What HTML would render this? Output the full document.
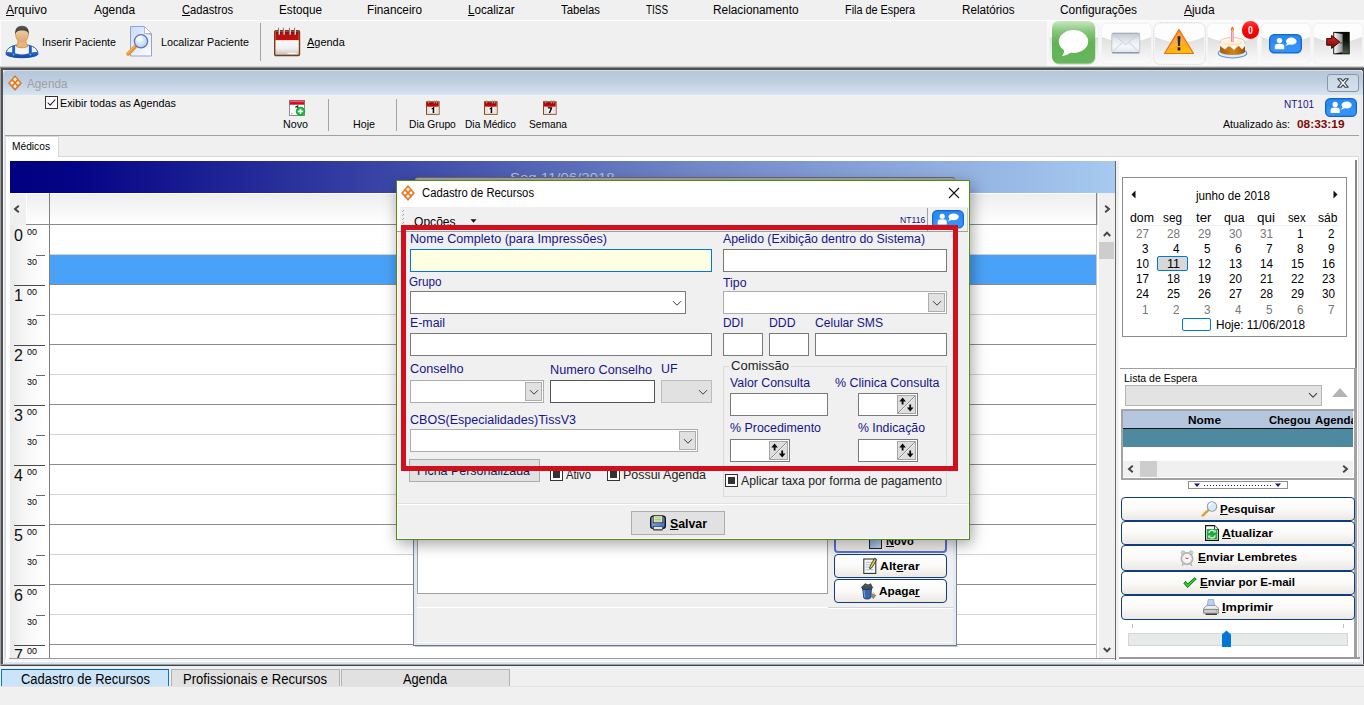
<!DOCTYPE html>
<html>
<head>
<meta charset="utf-8">
<title>Agenda</title>
<style>
*{box-sizing:border-box;margin:0;padding:0}
html,body{width:1364px;height:705px;overflow:hidden;background:#f0f0f0;font-family:"Liberation Sans",sans-serif;color:#000}
#app{position:absolute;left:0;top:0;width:1364px;height:705px;overflow:hidden;background:#f0f0f0}
.a{position:absolute;white-space:nowrap}
u{text-decoration:underline;text-underline-offset:1px;text-decoration-thickness:1px}
.in{position:absolute;background:#fff;border:1px solid #7a7a7a}
.cb{position:absolute;background:#fff;border:1px solid #adadad}
.btnr{position:absolute;background:linear-gradient(#ffffff 0%,#fbfaf9 50%,#ece8e3 100%);border:1px solid #0f3d80;border-radius:4px;}
</style>
</head>
<body>
<div id="app">
<div class="a" style="left:0px;top:0px;width:1364px;height:20px;background:#f0f0f0"></div>
<div class="a" style="left:0px;top:20px;width:1364px;height:1px;background:#fdfdfd"></div>
<div class="a" style="left:6.00px;top:3px;font-size:12px;line-height:14px;color:#000;transform:scaleX(1.0077);transform-origin:0 0;"><u>A</u>rquivo</div>
<div class="a" style="left:94.00px;top:3px;font-size:12px;line-height:14px;color:#000;transform:scaleX(0.9911);transform-origin:0 0;">Agenda</div>
<div class="a" style="left:182.00px;top:3px;font-size:12px;line-height:14px;color:#000;transform:scaleX(0.9326);transform-origin:0 0;"><u>C</u>adastros</div>
<div class="a" style="left:279.00px;top:3px;font-size:12px;line-height:14px;color:#000;transform:scaleX(0.9766);transform-origin:0 0;">Estoque</div>
<div class="a" style="left:367.00px;top:3px;font-size:12px;line-height:14px;color:#000;transform:scaleX(0.9817);transform-origin:0 0;">Financeiro</div>
<div class="a" style="left:468.00px;top:3px;font-size:12px;line-height:14px;color:#000;transform:scaleX(0.9683);transform-origin:0 0;"><u>L</u>ocalizar</div>
<div class="a" style="left:561.00px;top:3px;font-size:12px;line-height:14px;color:#000;transform:scaleX(0.9430);transform-origin:0 0;">Tabelas</div>
<div class="a" style="left:646.00px;top:3px;font-size:12px;line-height:14px;color:#000;transform:scaleX(0.8248);transform-origin:0 0;">TISS</div>
<div class="a" style="left:713.00px;top:3px;font-size:12px;line-height:14px;color:#000;transform:scaleX(0.9860);transform-origin:0 0;">Relacionamento</div>
<div class="a" style="left:844.60px;top:3px;font-size:12px;line-height:14px;color:#000;transform:scaleX(0.9048);transform-origin:0 0;">Fila de Espera</div>
<div class="a" style="left:962.00px;top:3px;font-size:12px;line-height:14px;color:#000;transform:scaleX(0.9719);transform-origin:0 0;">Relatórios</div>
<div class="a" style="left:1060.00px;top:3px;font-size:12px;line-height:14px;color:#000;transform:scaleX(0.9952);transform-origin:0 0;">Configurações</div>
<div class="a" style="left:1184.00px;top:3px;font-size:12px;line-height:14px;color:#000;transform:scaleX(0.9938);transform-origin:0 0;"><u>A</u>juda</div>
<div class="a" style="left:0px;top:21px;width:1364px;height:45px;background:#f0f0f0"></div>
<div class="a" style="left:0px;top:21px;width:1px;height:45px;background:#fbfbfb"></div>
<svg class="a" style="left:5px;top:25px" width="34" height="34" viewBox="0 0 34 34">
<defs><linearGradient id="pg1" x1="0" y1="0" x2="0" y2="1"><stop offset="0" stop-color="#2a6acc"/><stop offset="1" stop-color="#0a3c92"/></linearGradient>
<linearGradient id="pg2" x1="0" y1="0" x2="0" y2="1"><stop offset="0" stop-color="#f6d2a6"/><stop offset="1" stop-color="#dba572"/></linearGradient>
<linearGradient id="pg3" x1="0" y1="0" x2="0" y2="1"><stop offset="0" stop-color="#5a5a5a"/><stop offset="1" stop-color="#2c2c2c"/></linearGradient>
<clipPath id="pcl"><path d="M1 29.5 C1 24.5 4.5 21.5 10.5 20.2 L23.5 20.2 C29.5 21.5 33 24.5 33 29.5 C28 33.8 6 33.8 1 29.5Z"/></clipPath></defs>
<path d="M1 29.5 C1 24.5 4.5 21.5 10.5 20.2 L23.5 20.2 C29.5 21.5 33 24.5 33 29.5 C28 33.8 6 33.8 1 29.5Z" fill="#f3f3f3" stroke="#1b56b2" stroke-width="1"/>
<g clip-path="url(#pcl)">
<path d="M0 27.5 C3 26.5 6 27.3 8 27.6 C12 30 22 30 26 27.6 C28 27.3 31 26.5 34 27.5 L34 34 L0 34Z" fill="url(#pg1)"/>
<rect x="7.2" y="20" width="2.9" height="9" fill="#1f62c4"/><rect x="23.9" y="20" width="2.9" height="9" fill="#1f62c4"/>
</g>
<circle cx="8.6" cy="29.6" r="0.9" fill="#7fa8e6"/><circle cx="25.4" cy="29.6" r="0.9" fill="#7fa8e6"/>
<path d="M13.2 14 C13.2 18 12.5 19.5 10.8 21 C13 23.3 21 23.3 23.2 21 C21.5 19.5 20.8 18 20.8 14Z" fill="#e8b483" stroke="#c98a12" stroke-width="0.8"/>
<ellipse cx="17" cy="10.2" rx="6" ry="7.2" fill="url(#pg2)"/>
<path d="M10.4 10.3 C9.3 3.5 12.8 0.8 17 0.8 C21.2 0.8 24.7 3.5 23.6 10.3 C23.2 6.8 21.5 5.6 17 5.6 C12.5 5.6 10.8 6.8 10.4 10.3Z" fill="url(#pg3)"/>
<path d="M10.6 9 C10.8 12 11.6 14 13 15.5 M23.4 9 C23.2 12 22.4 14 21 15.5" stroke="#c98a12" stroke-width="0.7" fill="none"/>
</svg>
<div class="a" style="left:42.00px;top:36px;font-size:11px;line-height:12px;color:#000;transform:scaleX(0.9683);transform-origin:0 0;">Inserir Paciente</div>
<svg class="a" style="left:126px;top:25.7px" width="27" height="31" viewBox="0 0 27 31">
<defs><linearGradient id="dm1" x1="0" y1="0" x2="1" y2="1"><stop offset="0" stop-color="#c4dcfa"/><stop offset="0.55" stop-color="#e6f0fd"/><stop offset="1" stop-color="#ffffff"/></linearGradient>
<radialGradient id="dm2" cx="0.4" cy="0.35" r="0.7"><stop offset="0" stop-color="#ffffff"/><stop offset="1" stop-color="#9fd0f2"/></radialGradient></defs>
<path d="M4.5 0.5 L18.5 0.5 L25.5 7.5 L25.5 30 L4.5 30Z" fill="url(#dm1)" stroke="#9d9dd2" stroke-width="1"/>
<path d="M18.5 0.5 L18.5 7.5 L25.5 7.5Z" fill="#fff" stroke="#a9a9d8" stroke-width="0.8"/><path d="M18.5 7.5 L25.5 7.5 L25.5 9.5Z" fill="#9aa8b8" opacity="0.6"/>
<path d="M8.8 21.2 L2.2 27.8" stroke="#e8902a" stroke-width="3.8" stroke-linecap="round"/>
<path d="M8.3 20.7 L1.7 27.3" stroke="#f8b858" stroke-width="1.2" stroke-linecap="round"/>
<circle cx="15" cy="15.3" r="6.6" fill="url(#dm2)" stroke="#6c6ea8" stroke-width="1.3"/>
<path d="M11 14.5 A4.5 4.5 0 0 1 16 10.5" stroke="#fff" stroke-width="1.4" fill="none" opacity=".85"/>
</svg>
<div class="a" style="left:161.00px;top:36px;font-size:11px;line-height:12px;color:#000;transform:scaleX(0.9791);transform-origin:0 0;">Localizar Paciente</div>
<div class="a" style="left:260px;top:23px;width:1px;height:38px;background:#a3a3a3"></div>
<svg class="a" style="left:274px;top:27px" width="27" height="30" viewBox="0 0 27 30">
<defs><linearGradient id="c1" x1="0" y1="0" x2="0" y2="1"><stop offset="0" stop-color="#ffffff"/><stop offset="0.7" stop-color="#f2f2f2"/><stop offset="1" stop-color="#bdbdbd"/></linearGradient>
<linearGradient id="c2" x1="0" y1="0" x2="0" y2="1"><stop offset="0" stop-color="#8a0a0a"/><stop offset="0.45" stop-color="#b81010"/><stop offset="1" stop-color="#cc0a0a"/></linearGradient></defs>
<rect x="0.7" y="3.6" width="24.8" height="24.9" rx="1.2" fill="url(#c1)" stroke="#7a3c10" stroke-width="1.4"/>
<rect x="1.4" y="4.3" width="23.4" height="8.8" fill="url(#c2)"/>
<g stroke="#7d7d7d" stroke-width="1.2"><path d="M4.6 0.8V8"/><path d="M9.4 0.8V8"/><path d="M15.5 0.8V8"/><path d="M20.6 0.8V8"/></g>
<g stroke="#ececec" stroke-width="0.9"><path d="M5.5 0.8V7.6"/><path d="M10.3 0.8V7.6"/><path d="M16.4 0.8V7.6"/><path d="M21.5 0.8V7.6"/></g>
<ellipse cx="18" cy="26.3" rx="5" ry="0.9" fill="#fff" opacity=".8"/>
</svg>
<div class="a" style="left:307.00px;top:36px;font-size:11px;line-height:12px;color:#000;transform:scaleX(0.9941);transform-origin:0 0;"><u>A</u>genda</div>
<svg width="0" height="0" style="position:absolute"><defs><linearGradient id="gb1" x1="0" y1="0" x2="0" y2="1"><stop offset="0" stop-color="#f4f4f4"/><stop offset="0.32" stop-color="#dedede"/><stop offset="0.7" stop-color="#eeeeee"/><stop offset="1" stop-color="#fbfbfb"/></linearGradient></defs></svg>
<div class="a" style="left:1047px;top:21px;width:317px;height:45px;background:#fafafa"></div>
<svg class="a" style="left:1048px;top:22px" width="52" height="43" viewBox="0 0 52 43">
<rect x="0.5" y="0.5" width="51" height="42" rx="6.5" fill="#f3f3f3" stroke="#f6f6f6" stroke-width="1"/>
<rect x="2" y="2" width="48" height="39.5" rx="5" fill="url(#gb1)"/>
<path d="M2 7 Q2 2 7 2 L45 2 Q50 2 50 7 L50 15 Q26 25.5 2 15Z" fill="#fdfdfd"/>
</svg>
<svg class="a" style="left:1100px;top:22px" width="53" height="43" viewBox="0 0 53 43">
<rect x="0.5" y="0.5" width="52" height="42" rx="6.5" fill="#f3f3f3" stroke="#f6f6f6" stroke-width="1"/>
<rect x="2" y="2" width="49" height="39.5" rx="5" fill="url(#gb1)"/>
<path d="M2 7 Q2 2 7 2 L46 2 Q51 2 51 7 L51 15 Q26.5 25.5 2 15Z" fill="#fdfdfd"/>
</svg>
<svg class="a" style="left:1153px;top:22px" width="53" height="43" viewBox="0 0 53 43">
<rect x="0.5" y="0.5" width="52" height="42" rx="6.5" fill="#f3f3f3" stroke="#f6f6f6" stroke-width="1"/>
<rect x="2" y="2" width="49" height="39.5" rx="5" fill="url(#gb1)"/>
<path d="M2 7 Q2 2 7 2 L46 2 Q51 2 51 7 L51 15 Q26.5 25.5 2 15Z" fill="#fdfdfd"/>
<rect x="0.5" y="0.5" width="52" height="42" rx="6.5" fill="none" stroke="#d2d2d2" stroke-width="0.9" stroke-dasharray="1 1.4"/>
</svg>
<svg class="a" style="left:1206px;top:22px" width="53" height="43" viewBox="0 0 53 43">
<rect x="0.5" y="0.5" width="52" height="42" rx="6.5" fill="#f3f3f3" stroke="#f6f6f6" stroke-width="1"/>
<rect x="2" y="2" width="49" height="39.5" rx="5" fill="url(#gb1)"/>
<path d="M2 7 Q2 2 7 2 L46 2 Q51 2 51 7 L51 15 Q26.5 25.5 2 15Z" fill="#fdfdfd"/>
</svg>
<svg class="a" style="left:1260px;top:22px" width="52" height="43" viewBox="0 0 52 43">
<rect x="0.5" y="0.5" width="51" height="42" rx="6.5" fill="#f3f3f3" stroke="#f6f6f6" stroke-width="1"/>
<rect x="2" y="2" width="48" height="39.5" rx="5" fill="url(#gb1)"/>
<path d="M2 7 Q2 2 7 2 L45 2 Q50 2 50 7 L50 15 Q26 25.5 2 15Z" fill="#fdfdfd"/>
</svg>
<svg class="a" style="left:1312px;top:22px" width="52" height="43" viewBox="0 0 52 43">
<rect x="0.5" y="0.5" width="51" height="42" rx="6.5" fill="#f3f3f3" stroke="#f6f6f6" stroke-width="1"/>
<rect x="2" y="2" width="48" height="39.5" rx="5" fill="url(#gb1)"/>
<path d="M2 7 Q2 2 7 2 L45 2 Q50 2 50 7 L50 15 Q26 25.5 2 15Z" fill="#fdfdfd"/>
</svg>
<svg class="a" style="left:1052px;top:21px" width="44" height="44" viewBox="0 0 44 44">
<defs><linearGradient id="gm" x1="0" y1="0" x2="0" y2="1"><stop offset="0" stop-color="#c9e6c0"/><stop offset="0.25" stop-color="#86c67b"/><stop offset="0.5" stop-color="#62b356"/><stop offset="1" stop-color="#66b75b"/></linearGradient></defs>
<rect x="0.5" y="1.5" width="43" height="42" rx="6.5" fill="#5a8f52" opacity="0.35"/>
<rect x="0" y="0" width="43" height="42.5" rx="6.5" fill="url(#gm)"/>
<ellipse cx="21.5" cy="20.5" rx="14.7" ry="11.4" fill="#fff"/>
<path d="M12 27 C12.5 31 11.5 33 10 35 C14 34.5 17.5 33 20 30Z" fill="#fff"/>
</svg>
<svg class="a" style="left:1111.4px;top:32px" width="29.5" height="22.5" viewBox="0 0 31 23">
<defs><linearGradient id="ml" x1="0" y1="0" x2="0" y2="1"><stop offset="0" stop-color="#bcc6d0"/><stop offset="0.35" stop-color="#e6eaee"/><stop offset="0.7" stop-color="#f6f7f9"/><stop offset="1" stop-color="#dfe3e8"/></linearGradient>
<linearGradient id="ml2" x1="0" y1="0" x2="0" y2="1"><stop offset="0" stop-color="#c4ccd6"/><stop offset="1" stop-color="#f2f4f6"/></linearGradient></defs>
<rect x="0.8" y="0.8" width="29.4" height="20.6" rx="2" fill="url(#ml)" stroke="#b8c0ca" stroke-width="0.9"/>
<path d="M1.5 20.8 L11.5 11 M29.5 20.8 L19.5 11" stroke="#d8dde3" stroke-width="1.2" fill="none"/>
<path d="M1.4 1.6 L15.5 13 L29.6 1.6Z" fill="url(#ml2)" stroke="#c0c8d2" stroke-width="0.8"/>
<path d="M1.2 1.2 H29.8" stroke="#a4aebb" stroke-width="1"/>
<rect x="1" y="20.6" width="29" height="1.8" rx="0.8" fill="#8c9aae"/>
</svg>
<svg class="a" style="left:1163px;top:28px" width="32" height="27" viewBox="0 0 32 27">
<defs><linearGradient id="wg" x1="0" y1="0" x2="0.3" y2="1"><stop offset="0" stop-color="#f47a20"/><stop offset="0.6" stop-color="#f99b1c"/><stop offset="1" stop-color="#ffbe0a"/></linearGradient></defs>
<path d="M16 1.5 L30.5 25.5 L1.5 25.5Z" fill="url(#wg)" stroke="#e8701a" stroke-width="1.2" stroke-linejoin="round"/>
<path d="M16 3.5 L23 15 C19 17.5 12 17.5 6 21 Z" fill="#fff" opacity="0.16"/><path d="M14.5 8.2 L17.5 8.2 L17 18 L15 18Z" fill="#2a2a30"/><rect x="14.7" y="19.4" width="2.6" height="3" fill="#111"/>
</svg>
<svg class="a" style="left:1217px;top:26px" width="31" height="33" viewBox="0 0 31 33">
<defs><linearGradient id="ck" x1="0" y1="0" x2="1" y2="0"><stop offset="0" stop-color="#a85c0a"/><stop offset="0.55" stop-color="#d2851e"/><stop offset="1" stop-color="#9c5206"/></linearGradient></defs>
<ellipse cx="15.5" cy="27.2" rx="14.2" ry="4.8" fill="#dcebfb" stroke="#5a98e0" stroke-width="1.1"/>
<path d="M3 16 L3 25.5 C3 30 28 30 28 25.5 L28 16Z" fill="url(#ck)"/>
<ellipse cx="15.5" cy="16" rx="12.5" ry="4.5" fill="#fffaf0" stroke="#d8b080" stroke-width="0.7"/><ellipse cx="15.5" cy="16.6" rx="9.5" ry="2.7" fill="#fcdcae"/><ellipse cx="15.5" cy="16" rx="8.5" ry="2" fill="#fff4e2"/>
<path d="M3 16 C3 20.5 28 20.5 28 16 L28 20 L25 23.5 L21.5 19.5 L17 24 L12 19.5 L8 23.5 L3 20Z" fill="#fdf6ea"/>
<rect x="14" y="5.5" width="2.6" height="10.5" fill="#ee7fa0"/><rect x="14.9" y="5.5" width="0.8" height="10.5" fill="#fbd0dc"/>
<path d="M15.3 0.5 C17.5 2.5 17.3 5 15.3 6 C13.3 5 13.3 2.5 15.3 0.5Z" fill="#f26a1b"/><path d="M15.3 2.8 C16.3 3.8 16.1 5 15.3 5.6 C14.5 5 14.5 3.8 15.3 2.8Z" fill="#ffd23a"/>
</svg>
<div class="a" style="left:1241.6px;top:21.3px;width:17.6px;height:17.6px;border-radius:9px;background:linear-gradient(#ff3a3a 0%,#ff0606 45%,#ea0000 100%)"></div>
<div class="a" style="left:1247.75px;top:24px;font-size:11px;line-height:12px;color:#fff;font-weight:bold;transform:scaleX(0.8010);transform-origin:0 0;">0</div>
<svg class="a" style="left:1269px;top:34px" width="33" height="19.5" viewBox="0 0 33 19.5" preserveAspectRatio="none">
<rect x="0.6" y="0.6" width="31.8" height="18.3" rx="4.8" fill="#2a8af2" stroke="#1565d0" stroke-width="1.2"/><rect x="1.6" y="9" width="29.8" height="9" rx="4" fill="#4aa2ff" opacity=".35"/>
<circle cx="10.5" cy="6.6" r="2.7" fill="#fff"/><path d="M5.8 15.3 L5.8 12.5 C5.8 10.5 7.2 9.8 10.5 9.8 C13.8 9.8 15.2 10.5 15.2 12.5 L15.2 15.3Z" fill="#fff"/>
<ellipse cx="22.3" cy="7.2" rx="5.3" ry="3.6" fill="#fff"/><path d="M18.6 9 L16.2 12.2 L20.3 10.3Z" fill="#fff"/>
</svg>
<svg class="a" style="left:1326px;top:31px" width="25" height="24" viewBox="0 0 25 24">
<defs><linearGradient id="dr" x1="0" y1="0" x2="1" y2="0"><stop offset="0" stop-color="#fafafa"/><stop offset="1" stop-color="#8e8e8e"/></linearGradient>
<linearGradient id="dg" x1="0" y1="0" x2="0" y2="1"><stop offset="0" stop-color="#050505"/><stop offset="0.4" stop-color="#101510"/><stop offset="1" stop-color="#4a5c4c"/></linearGradient>
<linearGradient id="ar" x1="0" y1="0" x2="0" y2="1"><stop offset="0" stop-color="#e22424"/><stop offset="1" stop-color="#7a0808"/></linearGradient></defs>
<rect x="7.3" y="0.9" width="16.4" height="22.4" fill="#060606"/>
<path d="M16 1.8 L22.8 1.8 L22.8 22.5 L16 22.5Z" fill="url(#dg)"/>
<path d="M8.2 1.8 L16.6 2.9 L16.6 21.2 L8.2 22.5Z" fill="url(#dr)"/>
<circle cx="15" cy="12" r="0.8" fill="#333"/>
<path d="M0.7 7.6 L5.6 7.6 L5.6 4.4 L13.8 10.9 L5.6 17.4 L5.6 14.2 L0.7 14.2Z" fill="url(#ar)" stroke="#180000" stroke-width="0.9" stroke-linejoin="round"/>
</svg>
<div class="a" style="left:0px;top:66px;width:1364px;height:1px;background:#cfcfcf"></div>
<div class="a" style="left:0px;top:67px;width:1364px;height:1px;background:#8d8d8d"></div>
<div class="a" style="left:0px;top:68px;width:1364px;height:2px;background:#4f4f4f"></div>
<div class="a" style="left:0px;top:68px;width:1px;height:598px;background:#a2a2a2"></div>
<div class="a" style="left:1px;top:68px;width:2px;height:598px;background:#505050"></div>
<div class="a" style="left:1363px;top:68px;width:1px;height:598px;background:#444"></div>
<div class="a" style="left:1px;top:664px;width:1363px;height:1px;background:#9ea3ab"></div>
<div class="a" style="left:1px;top:665px;width:1363px;height:1px;background:#444"></div>
<div class="a" style="left:3px;top:70px;width:1360px;height:594px;background:#dbe5f2"></div>
<div class="a" style="left:1362px;top:72px;width:1px;height:592px;background:#f4f8fc"></div>
<div class="a" style="left:3px;top:70px;width:1px;height:594px;background:#f2f6fb"></div>
<div class="a" style="left:3px;top:70px;width:1360px;height:25px;background:linear-gradient(#f4f7fb 0,#b6c7d9 1px,#c0d0e1 50%,#d8e4f2 100%);border-radius:5px 5px 0 0"></div>
<div class="a" style="left:3px;top:70px;width:3px;height:3px;background:radial-gradient(circle at 100% 100%,transparent 0,transparent 3px,#fff 3.5px)"></div>
<div class="a" style="left:1360px;top:70px;width:3px;height:3px;background:radial-gradient(circle at 0 100%,transparent 0,transparent 3px,#555 3.5px)"></div>
<svg class="a" style="left:8px;top:75px" width="14" height="16" viewBox="0 0 14 16">
<path d="M7 0.9 L13.6 8.6 L7 16 L0.4 8.6Z" fill="#6a4ab0" opacity="0.55"/>
<path d="M7 0 L13.8 8 L7 15.6 L0.2 8Z" fill="#e8781a"/>
<path d="M7 2.55 L8.9 4.5 L7 6.45 L5.1 4.5Z" fill="#fff"/>
<path d="M4 5.95 L5.9 7.9 L4 9.85 L2.1 7.9Z" fill="#fff"/>
<path d="M10 5.95 L11.9 7.9 L10 9.85 L8.1 7.9Z" fill="#fff"/>
<path d="M7 9.35 L8.9 11.3 L7 13.25 L5.1 11.3Z" fill="#fff"/>
</svg>
<div class="a" style="left:27.00px;top:77px;font-size:12px;line-height:14px;color:#a0a0a6;transform:scaleX(0.9790);transform-origin:0 0;">Agenda</div>
<div class="a" style="left:1327px;top:74px;width:32px;height:18px;border:1px solid #8795a8;border-radius:3px;background:linear-gradient(#c9d6e5,#d4e0ee)"></div>
<svg class="a" style="left:1336.5px;top:77.5px" width="12" height="10" viewBox="0 0 12 10"><path d="M0.8 0.8 L4 0.8 L6 3.2 L8 0.8 L11.2 0.8 L7.7 5 L11.2 9.2 L8 9.2 L6 6.8 L4 9.2 L0.8 9.2 L4.3 5Z" fill="#f8f8f8" stroke="#3e3e48" stroke-width="1.1" stroke-linejoin="round"/></svg>
<div class="a" style="left:5px;top:95px;width:1355px;height:566px;background:#f0f0f0"></div>
<div class="a" style="left:45px;top:96px;width:13px;height:13px;border:1px solid #333;background:#fff"></div>
<svg class="a" style="left:45px;top:96px" width="13" height="13" viewBox="0 0 13 13"><path d="M2.7 6.5 L5.2 9.2 L10.3 3.5" stroke="#222" stroke-width="1.1" fill="none"/></svg>
<div class="a" style="left:60.00px;top:97px;font-size:11px;line-height:12px;color:#000;transform:scaleX(0.9829);transform-origin:0 0;">Exibir todas as Agendas</div>
<svg class="a" style="left:289px;top:100px" width="17" height="17" viewBox="0 0 17 17">
<defs><linearGradient id="nv1" x1="0" y1="0" x2="0" y2="1"><stop offset="0" stop-color="#ff8a9a"/><stop offset="0.35" stop-color="#f01030"/><stop offset="1" stop-color="#c00010"/></linearGradient></defs>
<rect x="0.5" y="0.5" width="15" height="15" fill="#fff" stroke="#8c8c8c" stroke-width="1"/><rect x="1" y="1" width="14" height="3.4" fill="url(#nv1)"/><rect x="0.5" y="0.5" width="15" height="4" fill="none" stroke="#9a5a62" stroke-width="0.8"/>
<path d="M6.3 7.3 L8.6 6 L8.6 8" stroke="#222" stroke-width="1.3" fill="none"/><path d="M2 13.8H3.6" stroke="#9a9a9a" stroke-width="0.9"/>
<circle cx="11.5" cy="11.4" r="4.7" fill="#18b03c"/><path d="M11.5 8.7V14.1 M8.8 11.4H14.2" stroke="#fff" stroke-width="1.7"/>
</svg>
<div class="a" style="left:283.00px;top:118px;font-size:11px;line-height:12px;color:#000;transform:scaleX(0.9736);transform-origin:0 0;">Novo</div>
<div class="a" style="left:328px;top:99px;width:1px;height:32px;background:#a3a3a3"></div>
<div class="a" style="left:352.50px;top:118px;font-size:11px;line-height:12px;color:#000;transform:scaleX(0.9725);transform-origin:0 0;">Hoje</div>
<div class="a" style="left:396px;top:99px;width:1px;height:32px;background:#a3a3a3"></div>
<svg class="a" style="left:426px;top:100.4px" width="14" height="15" viewBox="0 0 14 15">
<defs><linearGradient id="sc1426" x1="0" y1="0" x2="0" y2="1"><stop offset="0" stop-color="#8e0000"/><stop offset="1" stop-color="#e00808"/></linearGradient></defs>
<rect x="0.5" y="1.7" width="12.6" height="12.6" fill="#f4f4f4" stroke="#8a4513" stroke-width="1"/>
<rect x="1" y="2.2" width="11.6" height="4.6" fill="url(#sc1426)"/>
<rect x="1" y="6.8" width="3" height="7" fill="#e4e4e4"/><rect x="10" y="6.8" width="2.6" height="7" fill="#e4e4e4"/>
<path d="M2.7 0.3V3.6 M8.3 0.3V3.6 M10.6 0.3V3.6" stroke="#9a9a9a" stroke-width="1"/>
<path d="M5.6 8.6 L7.6 7.1 L8.2 7.1 L8.2 13 L6.7 13 L6.7 9 L5.6 9.6Z" fill="#000"/>
</svg>
<div class="a" style="left:408.70px;top:118px;font-size:11px;line-height:12px;color:#000;transform:scaleX(0.9336);transform-origin:0 0;">Dia Grupo</div>
<svg class="a" style="left:484.3px;top:100.4px" width="14" height="15" viewBox="0 0 14 15">
<defs><linearGradient id="sc1484" x1="0" y1="0" x2="0" y2="1"><stop offset="0" stop-color="#8e0000"/><stop offset="1" stop-color="#e00808"/></linearGradient></defs>
<rect x="0.5" y="1.7" width="12.6" height="12.6" fill="#f4f4f4" stroke="#8a4513" stroke-width="1"/>
<rect x="1" y="2.2" width="11.6" height="4.6" fill="url(#sc1484)"/>
<rect x="1" y="6.8" width="3" height="7" fill="#e4e4e4"/><rect x="10" y="6.8" width="2.6" height="7" fill="#e4e4e4"/>
<path d="M2.7 0.3V3.6 M8.3 0.3V3.6 M10.6 0.3V3.6" stroke="#9a9a9a" stroke-width="1"/>
<path d="M5.6 8.6 L7.6 7.1 L8.2 7.1 L8.2 13 L6.7 13 L6.7 9 L5.6 9.6Z" fill="#000"/>
</svg>
<div class="a" style="left:465.00px;top:118px;font-size:11px;line-height:12px;color:#000;transform:scaleX(0.9270);transform-origin:0 0;">Dia Médico</div>
<svg class="a" style="left:542.5px;top:100.4px" width="14" height="15" viewBox="0 0 14 15">
<defs><linearGradient id="sc7542" x1="0" y1="0" x2="0" y2="1"><stop offset="0" stop-color="#8e0000"/><stop offset="1" stop-color="#e00808"/></linearGradient></defs>
<rect x="0.5" y="1.7" width="12.6" height="12.6" fill="#f4f4f4" stroke="#8a4513" stroke-width="1"/>
<rect x="1" y="2.2" width="11.6" height="4.6" fill="url(#sc7542)"/>
<rect x="1" y="6.8" width="3" height="7" fill="#e4e4e4"/><rect x="10" y="6.8" width="2.6" height="7" fill="#e4e4e4"/>
<path d="M2.7 0.3V3.6 M8.3 0.3V3.6 M10.6 0.3V3.6" stroke="#9a9a9a" stroke-width="1"/>
<path d="M4.8 7.2 L9.2 7.2 L9.2 8.3 L7.2 13 L5.7 13 L7.6 8.5 L4.8 8.5Z" fill="#000"/>
</svg>
<div class="a" style="left:529.00px;top:118px;font-size:11px;line-height:12px;color:#000;transform:scaleX(0.9276);transform-origin:0 0;">Semana</div>
<div class="a" style="left:1284.00px;top:98px;font-size:11px;line-height:12px;color:#25148c;transform:scaleX(0.9087);transform-origin:0 0;">NT101</div>
<svg class="a" style="left:1325px;top:98px" width="32" height="19" viewBox="0 0 33 19.5" preserveAspectRatio="none">
<rect x="0.6" y="0.6" width="31.8" height="18.3" rx="4.8" fill="#2a8af2" stroke="#1565d0" stroke-width="1.2"/><rect x="1.6" y="9" width="29.8" height="9" rx="4" fill="#4aa2ff" opacity=".35"/>
<circle cx="10.5" cy="6.6" r="2.7" fill="#fff"/><path d="M5.8 15.3 L5.8 12.5 C5.8 10.5 7.2 9.8 10.5 9.8 C13.8 9.8 15.2 10.5 15.2 12.5 L15.2 15.3Z" fill="#fff"/>
<ellipse cx="22.3" cy="7.2" rx="5.3" ry="3.6" fill="#fff"/><path d="M18.6 9 L16.2 12.2 L20.3 10.3Z" fill="#fff"/>
</svg>
<div class="a" style="left:1223.00px;top:118px;font-size:11px;line-height:12px;color:#000;transform:scaleX(0.9697);transform-origin:0 0;">Atualizado às:</div>
<div class="a" style="left:1297.00px;top:118px;font-size:11px;line-height:12px;color:#7c0a0a;font-weight:bold;transform:scaleX(1.0789);transform-origin:0 0;">08:33:19</div>
<div class="a" style="left:5px;top:135px;width:1355px;height:1px;background:#a0a0a0"></div>
<div class="a" style="left:5px;top:136px;width:1355px;height:21px;background:#f0f0f0"></div>
<div class="a" style="left:5px;top:156px;width:1355px;height:1px;background:#d9d9d9"></div>
<div class="a" style="left:5px;top:136px;width:54px;height:21px;background:#fff;border:1px solid #d9d9d9;border-bottom:none"></div>
<div class="a" style="left:12.00px;top:140px;font-size:11px;line-height:12px;color:#000;transform:scaleX(0.9278);transform-origin:0 0;">Médicos</div>
<div class="a" style="left:5px;top:157px;width:1355px;height:504px;background:#fff"></div>
<div class="a" style="left:5px;top:157px;width:1px;height:503px;background:#d9d9d9"></div>
<div class="a" style="left:1358px;top:157px;width:1px;height:504px;background:#d9d9d9"></div>
<div class="a" style="left:1359px;top:95px;width:2px;height:567px;background:#f0f0f0"></div>
<div class="a" style="left:10px;top:161px;width:1105px;height:32px;background:linear-gradient(90deg,#000080 0%,#040486 6%,#323ca1 30%,#7187c8 62%,#a6caf0 100%)"></div>
<div class="a" style="left:509.60px;top:170px;font-size:13px;line-height:15px;color:#b4c0dc;transform:scaleX(1.1505);transform-origin:0 0;">Seg 11/06/2018</div>
<div class="a" style="left:10px;top:193px;width:1087px;height:1px;background:#fff"></div>
<div class="a" style="left:10px;top:194px;width:1087px;height:30px;background:linear-gradient(#eeeeee,#ffffff)"></div>
<div class="a" style="left:10px;top:194px;width:16px;height:31px;background:#f0f0f0"></div>
<div class="a" style="left:26px;top:194px;width:1px;height:30px;background:#fff"></div>
<div class="a" style="left:49px;top:193px;width:1px;height:467px;background:#808080"></div>
<div class="a" style="left:26px;top:224px;width:1071px;height:1px;background:#8a8a8a"></div>
<div class="a" style="left:1096px;top:193px;width:1px;height:32px;background:#868686"></div>
<svg class="a" style="left:13.4px;top:204.5px" width="8" height="8" viewBox="0 0 8 8"><path d="M5.8 0.8 L2 4 L5.8 7.2" stroke="#444" stroke-width="1.9" fill="none"/></svg>
<div class="a" style="left:10px;top:225px;width:39px;height:433px;background:linear-gradient(90deg,#e9e9e9 0,#f3f3f3 10px,#fafafa 22px,#fff 34px)"></div>
<div class="a" style="left:50px;top:225px;width:1047px;height:433px;background:#fff"></div>
<div class="a" style="left:50px;top:255px;width:1047px;height:30px;background:#4aa2f8"></div>
<div class="a" style="left:50px;top:254px;width:1047px;height:1px;background:#d4d4d4"></div>
<div class="a" style="left:50px;top:284px;width:1047px;height:1px;background:#8c8c8c"></div>
<div class="a" style="left:50px;top:314px;width:1047px;height:1px;background:#d4d4d4"></div>
<div class="a" style="left:50px;top:344px;width:1047px;height:1px;background:#8c8c8c"></div>
<div class="a" style="left:50px;top:374px;width:1047px;height:1px;background:#d4d4d4"></div>
<div class="a" style="left:50px;top:404px;width:1047px;height:1px;background:#8c8c8c"></div>
<div class="a" style="left:50px;top:434px;width:1047px;height:1px;background:#d4d4d4"></div>
<div class="a" style="left:50px;top:464px;width:1047px;height:1px;background:#8c8c8c"></div>
<div class="a" style="left:50px;top:494px;width:1047px;height:1px;background:#d4d4d4"></div>
<div class="a" style="left:50px;top:524px;width:1047px;height:1px;background:#8c8c8c"></div>
<div class="a" style="left:50px;top:554px;width:1047px;height:1px;background:#d4d4d4"></div>
<div class="a" style="left:50px;top:584px;width:1047px;height:1px;background:#8c8c8c"></div>
<div class="a" style="left:50px;top:614px;width:1047px;height:1px;background:#d4d4d4"></div>
<div class="a" style="left:50px;top:644px;width:1047px;height:1px;background:#8c8c8c"></div>
<div class="a" style="left:36px;top:255px;width:9px;height:1px;background:#6a6a6a"></div>
<div class="a" style="left:14.00px;top:226.4px;font-size:17px;line-height:19px;color:#111;transform:scaleX(0.9414);transform-origin:0 0;">0</div>
<div class="a" style="left:27.00px;top:226.8px;font-size:9.3px;line-height:10px;color:#000;transform:scaleX(0.9571);transform-origin:0 0;">00</div>
<div class="a" style="left:27.00px;top:257px;font-size:9.3px;line-height:10px;color:#000;transform:scaleX(0.9571);transform-origin:0 0;">30</div>
<div class="a" style="left:14px;top:285px;width:31px;height:1px;background:#4a4a4a"></div>
<div class="a" style="left:36px;top:315px;width:9px;height:1px;background:#6a6a6a"></div>
<div class="a" style="left:14.00px;top:286.4px;font-size:17px;line-height:19px;color:#111;transform:scaleX(0.9414);transform-origin:0 0;">1</div>
<div class="a" style="left:27.00px;top:286.8px;font-size:9.3px;line-height:10px;color:#000;transform:scaleX(0.9571);transform-origin:0 0;">00</div>
<div class="a" style="left:27.00px;top:317px;font-size:9.3px;line-height:10px;color:#000;transform:scaleX(0.9571);transform-origin:0 0;">30</div>
<div class="a" style="left:14px;top:345px;width:31px;height:1px;background:#4a4a4a"></div>
<div class="a" style="left:36px;top:375px;width:9px;height:1px;background:#6a6a6a"></div>
<div class="a" style="left:14.00px;top:346.4px;font-size:17px;line-height:19px;color:#111;transform:scaleX(0.9414);transform-origin:0 0;">2</div>
<div class="a" style="left:27.00px;top:346.8px;font-size:9.3px;line-height:10px;color:#000;transform:scaleX(0.9571);transform-origin:0 0;">00</div>
<div class="a" style="left:27.00px;top:377px;font-size:9.3px;line-height:10px;color:#000;transform:scaleX(0.9571);transform-origin:0 0;">30</div>
<div class="a" style="left:14px;top:405px;width:31px;height:1px;background:#4a4a4a"></div>
<div class="a" style="left:36px;top:435px;width:9px;height:1px;background:#6a6a6a"></div>
<div class="a" style="left:14.00px;top:406.4px;font-size:17px;line-height:19px;color:#111;transform:scaleX(0.9414);transform-origin:0 0;">3</div>
<div class="a" style="left:27.00px;top:406.8px;font-size:9.3px;line-height:10px;color:#000;transform:scaleX(0.9571);transform-origin:0 0;">00</div>
<div class="a" style="left:27.00px;top:437px;font-size:9.3px;line-height:10px;color:#000;transform:scaleX(0.9571);transform-origin:0 0;">30</div>
<div class="a" style="left:14px;top:465px;width:31px;height:1px;background:#4a4a4a"></div>
<div class="a" style="left:36px;top:495px;width:9px;height:1px;background:#6a6a6a"></div>
<div class="a" style="left:14.00px;top:466.4px;font-size:17px;line-height:19px;color:#111;transform:scaleX(0.9414);transform-origin:0 0;">4</div>
<div class="a" style="left:27.00px;top:466.8px;font-size:9.3px;line-height:10px;color:#000;transform:scaleX(0.9571);transform-origin:0 0;">00</div>
<div class="a" style="left:27.00px;top:497px;font-size:9.3px;line-height:10px;color:#000;transform:scaleX(0.9571);transform-origin:0 0;">30</div>
<div class="a" style="left:14px;top:525px;width:31px;height:1px;background:#4a4a4a"></div>
<div class="a" style="left:36px;top:555px;width:9px;height:1px;background:#6a6a6a"></div>
<div class="a" style="left:14.00px;top:526.4px;font-size:17px;line-height:19px;color:#111;transform:scaleX(0.9414);transform-origin:0 0;">5</div>
<div class="a" style="left:27.00px;top:526.8px;font-size:9.3px;line-height:10px;color:#000;transform:scaleX(0.9571);transform-origin:0 0;">00</div>
<div class="a" style="left:27.00px;top:557px;font-size:9.3px;line-height:10px;color:#000;transform:scaleX(0.9571);transform-origin:0 0;">30</div>
<div class="a" style="left:14px;top:585px;width:31px;height:1px;background:#4a4a4a"></div>
<div class="a" style="left:36px;top:615px;width:9px;height:1px;background:#6a6a6a"></div>
<div class="a" style="left:14.00px;top:586.4px;font-size:17px;line-height:19px;color:#111;transform:scaleX(0.9414);transform-origin:0 0;">6</div>
<div class="a" style="left:27.00px;top:586.8px;font-size:9.3px;line-height:10px;color:#000;transform:scaleX(0.9571);transform-origin:0 0;">00</div>
<div class="a" style="left:27.00px;top:617px;font-size:9.3px;line-height:10px;color:#000;transform:scaleX(0.9571);transform-origin:0 0;">30</div>
<div class="a" style="left:14px;top:645px;width:31px;height:1px;background:#4a4a4a"></div>
<div class="a" style="left:10px;top:645px;width:39px;height:13px;overflow:hidden">
<div class="a" style="left:4px;top:1.4px;font-size:17px;line-height:19px;transform:scaleX(.94);transform-origin:0 0;color:#111">7</div><div class="a" style="left:17px;top:1.4px;font-size:9.3px;line-height:11px;transform:scaleX(.96);transform-origin:0 0">00</div></div>
<div class="a" style="left:9px;top:658px;width:1107px;height:1px;background:#9c9c9c"></div>
<div class="a" style="left:5px;top:659px;width:1355px;height:2px;background:#f4f4f4"></div>
<div class="a" style="left:5px;top:661px;width:1355px;height:1px;background:#fff"></div>
<div class="a" style="left:1096px;top:225px;width:1px;height:433px;background:#c6c6c6"></div>
<div class="a" style="left:1097px;top:193px;width:2px;height:465px;background:#fff"></div>
<div class="a" style="left:1099px;top:193px;width:16px;height:465px;background:#f0f0f0"></div>
<div class="a" style="left:1097px;top:193px;width:1px;height:32px;background:#d8d8d8"></div>
<svg class="a" style="left:1103px;top:204.5px" width="8" height="8" viewBox="0 0 8 8"><path d="M2.2 0.8 L6 4 L2.2 7.2" stroke="#444" stroke-width="1.9" fill="none"/></svg>
<svg class="a" style="left:1102.5px;top:230px" width="8" height="8" viewBox="0 0 8 8"><path d="M0.8 6 L4 2.6 L7.2 6" stroke="#444" stroke-width="1.9" fill="none"/></svg>
<div class="a" style="left:1099px;top:242px;width:15px;height:17px;background:#cdcdcd"></div>
<svg class="a" style="left:1102.5px;top:646px" width="8" height="8" viewBox="0 0 8 8"><path d="M0.8 2 L4 5.4 L7.2 2" stroke="#444" stroke-width="1.9" fill="none"/></svg>
<div class="a" style="left:1115px;top:161px;width:1px;height:499px;background:#696969"></div>
<div class="a" style="left:1116px;top:161px;width:3px;height:499px;background:#f0f0f0"></div>
<div class="a" style="left:1119px;top:157px;width:239px;height:505px;background:#fff"></div>
<div class="a" style="left:1355px;top:160px;width:2px;height:209px;background:#868686"></div>
<div class="a" style="left:1354px;top:369px;width:3px;height:290px;background:#a0a0a0"></div>
<div class="a" style="left:1119px;top:657px;width:241px;height:2px;background:#9a9a9a"></div>
<div class="a" style="left:1122px;top:177px;width:225px;height:160px;border:1px solid #8c8c8c;background:#fff"></div>
<div class="a" style="left:1196.00px;top:189px;font-size:12px;line-height:14px;color:#000;transform:scaleX(0.9729);transform-origin:0 0;">junho de 2018</div>
<svg class="a" style="left:1131px;top:190px" width="5" height="9" viewBox="0 0 5 9"><path d="M4.5 0.5 L0.5 4.5 L4.5 8.5Z" fill="#111"/></svg>
<svg class="a" style="left:1333px;top:190px" width="5" height="9" viewBox="0 0 5 9"><path d="M0.5 0.5 L4.5 4.5 L0.5 8.5Z" fill="#111"/></svg>
<div class="a" style="left:1129.70px;top:211px;font-size:12px;line-height:14px;color:#000;transform:scaleX(1.0282);transform-origin:0 0;">dom</div>
<div class="a" style="left:1163.20px;top:211px;font-size:12px;line-height:14px;color:#000;transform:scaleX(0.9821);transform-origin:0 0;">seg</div>
<div class="a" style="left:1195.95px;top:211px;font-size:12px;line-height:14px;color:#000;transform:scaleX(1.1069);transform-origin:0 0;">ter</div>
<div class="a" style="left:1224.45px;top:211px;font-size:12px;line-height:14px;color:#000;transform:scaleX(1.0240);transform-origin:0 0;">qua</div>
<div class="a" style="left:1256.70px;top:211px;font-size:12px;line-height:14px;color:#000;transform:scaleX(1.1241);transform-origin:0 0;">qui</div>
<div class="a" style="left:1287.95px;top:211px;font-size:12px;line-height:14px;color:#000;transform:scaleX(0.9372);transform-origin:0 0;">sex</div>
<div class="a" style="left:1317.95px;top:211px;font-size:12px;line-height:14px;color:#000;transform:scaleX(1.0079);transform-origin:0 0;">sáb</div>
<div class="a" style="left:1130px;top:225px;width:209px;height:1px;background:#f0f0f0"></div>
<div class="a" style="left:1135.50px;top:227px;font-size:12px;line-height:14px;color:#767676;transform:scaleX(0.9741);transform-origin:0 0;">27</div>
<div class="a" style="left:1166.50px;top:227px;font-size:12px;line-height:14px;color:#767676;transform:scaleX(0.9741);transform-origin:0 0;">28</div>
<div class="a" style="left:1197.50px;top:227px;font-size:12px;line-height:14px;color:#767676;transform:scaleX(0.9741);transform-origin:0 0;">29</div>
<div class="a" style="left:1228.50px;top:227px;font-size:12px;line-height:14px;color:#767676;transform:scaleX(0.9741);transform-origin:0 0;">30</div>
<div class="a" style="left:1259.50px;top:227px;font-size:12px;line-height:14px;color:#767676;transform:scaleX(0.9741);transform-origin:0 0;">31</div>
<div class="a" style="left:1297.00px;top:227px;font-size:12px;line-height:14px;color:#000;transform:scaleX(0.9741);transform-origin:0 0;">1</div>
<div class="a" style="left:1328.00px;top:227px;font-size:12px;line-height:14px;color:#000;transform:scaleX(0.9741);transform-origin:0 0;">2</div>
<div class="a" style="left:1142.00px;top:242.1px;font-size:12px;line-height:14px;color:#000;transform:scaleX(0.9741);transform-origin:0 0;">3</div>
<div class="a" style="left:1173.00px;top:242.1px;font-size:12px;line-height:14px;color:#000;transform:scaleX(0.9741);transform-origin:0 0;">4</div>
<div class="a" style="left:1204.00px;top:242.1px;font-size:12px;line-height:14px;color:#000;transform:scaleX(0.9741);transform-origin:0 0;">5</div>
<div class="a" style="left:1235.00px;top:242.1px;font-size:12px;line-height:14px;color:#000;transform:scaleX(0.9741);transform-origin:0 0;">6</div>
<div class="a" style="left:1266.00px;top:242.1px;font-size:12px;line-height:14px;color:#000;transform:scaleX(0.9741);transform-origin:0 0;">7</div>
<div class="a" style="left:1297.00px;top:242.1px;font-size:12px;line-height:14px;color:#000;transform:scaleX(0.9741);transform-origin:0 0;">8</div>
<div class="a" style="left:1328.00px;top:242.1px;font-size:12px;line-height:14px;color:#000;transform:scaleX(0.9741);transform-origin:0 0;">9</div>
<div class="a" style="left:1135.50px;top:257.2px;font-size:12px;line-height:14px;color:#000;transform:scaleX(0.9741);transform-origin:0 0;">10</div>
<div class="a" style="left:1157px;top:256px;width:31px;height:15px;border:1px solid #0078d7;border-radius:2px;background:#d8d8d8"></div>
<div class="a" style="left:1166.50px;top:257.2px;font-size:12px;line-height:14px;color:#000;transform:scaleX(1.0437);transform-origin:0 0;">11</div>
<div class="a" style="left:1197.50px;top:257.2px;font-size:12px;line-height:14px;color:#000;transform:scaleX(0.9741);transform-origin:0 0;">12</div>
<div class="a" style="left:1228.50px;top:257.2px;font-size:12px;line-height:14px;color:#000;transform:scaleX(0.9741);transform-origin:0 0;">13</div>
<div class="a" style="left:1259.50px;top:257.2px;font-size:12px;line-height:14px;color:#000;transform:scaleX(0.9741);transform-origin:0 0;">14</div>
<div class="a" style="left:1290.50px;top:257.2px;font-size:12px;line-height:14px;color:#000;transform:scaleX(0.9741);transform-origin:0 0;">15</div>
<div class="a" style="left:1321.50px;top:257.2px;font-size:12px;line-height:14px;color:#000;transform:scaleX(0.9741);transform-origin:0 0;">16</div>
<div class="a" style="left:1135.50px;top:272.3px;font-size:12px;line-height:14px;color:#000;transform:scaleX(0.9741);transform-origin:0 0;">17</div>
<div class="a" style="left:1166.50px;top:272.3px;font-size:12px;line-height:14px;color:#000;transform:scaleX(0.9741);transform-origin:0 0;">18</div>
<div class="a" style="left:1197.50px;top:272.3px;font-size:12px;line-height:14px;color:#000;transform:scaleX(0.9741);transform-origin:0 0;">19</div>
<div class="a" style="left:1228.50px;top:272.3px;font-size:12px;line-height:14px;color:#000;transform:scaleX(0.9741);transform-origin:0 0;">20</div>
<div class="a" style="left:1259.50px;top:272.3px;font-size:12px;line-height:14px;color:#000;transform:scaleX(0.9741);transform-origin:0 0;">21</div>
<div class="a" style="left:1290.50px;top:272.3px;font-size:12px;line-height:14px;color:#000;transform:scaleX(0.9741);transform-origin:0 0;">22</div>
<div class="a" style="left:1321.50px;top:272.3px;font-size:12px;line-height:14px;color:#000;transform:scaleX(0.9741);transform-origin:0 0;">23</div>
<div class="a" style="left:1135.50px;top:287.4px;font-size:12px;line-height:14px;color:#000;transform:scaleX(0.9741);transform-origin:0 0;">24</div>
<div class="a" style="left:1166.50px;top:287.4px;font-size:12px;line-height:14px;color:#000;transform:scaleX(0.9741);transform-origin:0 0;">25</div>
<div class="a" style="left:1197.50px;top:287.4px;font-size:12px;line-height:14px;color:#000;transform:scaleX(0.9741);transform-origin:0 0;">26</div>
<div class="a" style="left:1228.50px;top:287.4px;font-size:12px;line-height:14px;color:#000;transform:scaleX(0.9741);transform-origin:0 0;">27</div>
<div class="a" style="left:1259.50px;top:287.4px;font-size:12px;line-height:14px;color:#000;transform:scaleX(0.9741);transform-origin:0 0;">28</div>
<div class="a" style="left:1290.50px;top:287.4px;font-size:12px;line-height:14px;color:#000;transform:scaleX(0.9741);transform-origin:0 0;">29</div>
<div class="a" style="left:1321.50px;top:287.4px;font-size:12px;line-height:14px;color:#000;transform:scaleX(0.9741);transform-origin:0 0;">30</div>
<div class="a" style="left:1142.00px;top:302.5px;font-size:12px;line-height:14px;color:#767676;transform:scaleX(0.9741);transform-origin:0 0;">1</div>
<div class="a" style="left:1173.00px;top:302.5px;font-size:12px;line-height:14px;color:#767676;transform:scaleX(0.9741);transform-origin:0 0;">2</div>
<div class="a" style="left:1204.00px;top:302.5px;font-size:12px;line-height:14px;color:#767676;transform:scaleX(0.9741);transform-origin:0 0;">3</div>
<div class="a" style="left:1235.00px;top:302.5px;font-size:12px;line-height:14px;color:#767676;transform:scaleX(0.9741);transform-origin:0 0;">4</div>
<div class="a" style="left:1266.00px;top:302.5px;font-size:12px;line-height:14px;color:#767676;transform:scaleX(0.9741);transform-origin:0 0;">5</div>
<div class="a" style="left:1297.00px;top:302.5px;font-size:12px;line-height:14px;color:#767676;transform:scaleX(0.9741);transform-origin:0 0;">6</div>
<div class="a" style="left:1328.00px;top:302.5px;font-size:12px;line-height:14px;color:#767676;transform:scaleX(0.9741);transform-origin:0 0;">7</div>
<div class="a" style="left:1182px;top:318px;width:29px;height:13px;border:1px solid #0078d7;border-radius:2px;background:#fff"></div>
<div class="a" style="left:1216.00px;top:317.5px;font-size:12px;line-height:14px;color:#000;transform:scaleX(0.9833);transform-origin:0 0;">Hoje: 11/06/2018</div>
<div class="a" style="left:1120px;top:368px;width:237px;height:1px;background:#a0a0a0"></div>
<div class="a" style="left:1124.00px;top:372px;font-size:11px;line-height:12px;color:#000;transform:scaleX(0.9551);transform-origin:0 0;">Lista de Espera</div>
<div class="a" style="left:1125px;top:385px;width:197px;height:21px;border:1px solid #b4b4b4;background:#e3e3e3"></div>
<svg class="a" style="left:1308px;top:392px" width="10" height="7" viewBox="0 0 10 7"><path d="M1 1.2 L5 5.2 L9 1.2" stroke="#444" stroke-width="1.1" fill="none"/></svg>
<svg class="a" style="left:1331px;top:387px" width="18" height="11" viewBox="0 0 18 11"><path d="M9 1 L17 10 L1 10Z" fill="#b4b4b4"/></svg>
<div class="a" style="left:1121px;top:409px;width:235px;height:71px;border:2px solid #a4a4a4;background:#fff;overflow:hidden"></div>
<div class="a" style="left:1123px;top:411px;width:230px;height:17px;background:#b4c7df"></div>
<div class="a" style="left:1123px;top:428px;width:230px;height:1px;background:#111"></div>
<div class="a" style="left:1123px;top:429px;width:230px;height:18px;background:#4d8a9f"></div>
<div class="a" style="left:1123px;top:411px;width:230px;height:17px;overflow:hidden">
<div class="a" style="left:64.50px;top:2.6px;font-size:11px;line-height:12px;color:#000;font-weight:bold;transform:scaleX(1.0798);transform-origin:0 0;">Nome</div>
<div class="a" style="left:146.00px;top:2.6px;font-size:11px;line-height:12px;color:#000;font-weight:bold;transform:scaleX(1.0138);transform-origin:0 0;">Chegou</div>
<div class="a" style="left:191.50px;top:2.6px;font-size:11px;line-height:12px;color:#000;font-weight:bold;transform:scaleX(1.0364);transform-origin:0 0;">Agendamento</div>
</div>
<div class="a" style="left:1123px;top:461px;width:230px;height:16px;background:#f0f0f0"></div>
<svg class="a" style="left:1127px;top:465px" width="8" height="8" viewBox="0 0 8 8"><path d="M5.8 0.8 L2 4 L5.8 7.2" stroke="#444" stroke-width="1.9" fill="none"/></svg>
<svg class="a" style="left:1341px;top:465px" width="8" height="8" viewBox="0 0 8 8"><path d="M2.2 0.8 L6 4 L2.2 7.2" stroke="#444" stroke-width="1.9" fill="none"/></svg>
<div class="a" style="left:1140px;top:461px;width:17px;height:16px;background:#cdcdcd"></div>
<div class="a" style="left:1188px;top:481px;width:100px;height:8px;border:1px solid #8f8f8f;background:#fff"></div>
<svg class="a" style="left:1188px;top:481px" width="100" height="8" viewBox="0 0 100 8"><path d="M6 2.5 L12 2.5 L9 6Z M87 2.5 L93 2.5 L90 6Z" fill="#181878"/><path d="M16 4.5 H84" stroke="#181878" stroke-width="1" stroke-dasharray="1 2"/></svg>
<div class="btnr" style="left:1121px;top:497px;width:234px;height:24px"></div>
<svg class="a" style="left:1201px;top:499.5px" width="17" height="17" viewBox="0 0 17 17"><path d="M7.2 10.2 L1.8 15.4" stroke="#e0902c" stroke-width="2.5" stroke-linecap="round"/><path d="M6.8 9.8 L1.4 15" stroke="#f6c27a" stroke-width="0.8" stroke-linecap="round"/><circle cx="11" cy="6.5" r="4.7" fill="#d4ecfb" stroke="#9aa0ac" stroke-width="1.1"/><path d="M8.2 6 A3 3 0 0 1 11.5 3.4" stroke="#fff" stroke-width="1.5" fill="none"/></svg>
<div class="a" style="left:1219.80px;top:502.5px;font-size:11px;line-height:12px;color:#000;font-weight:bold;transform:scaleX(1.0460);transform-origin:0 0;"><u>P</u>esquisar</div>
<div class="btnr" style="left:1121px;top:521px;width:234px;height:24px"></div>
<svg class="a" style="left:1204.6px;top:525.3px" width="14" height="16" viewBox="0 0 14 16"><path d="M0.6 0.6 L9.5 0.6 L13.4 4.5 L13.4 15.4 L0.6 15.4Z" fill="#fff" stroke="#111" stroke-width="1.1"/><path d="M9.5 0.6 L9.5 4.5 L13.4 4.5" fill="#e8e8e8" stroke="#111" stroke-width="0.8"/><rect x="1.8" y="4" width="10.4" height="10.2" fill="#22a844"/><path d="M3.8 7.8 A3.2 3 0 0 1 9.6 6.6 M10.2 10.4 A3.2 3 0 0 1 4.4 11.6" stroke="#c8f8c8" stroke-width="1.5" fill="none"/><path d="M8.2 7.6 L10.8 7.6 L10.8 5Z M5.8 10.6 L3.2 10.6 L3.2 13.2Z" fill="#c8f8c8"/></svg>
<div class="a" style="left:1221.70px;top:526.8px;font-size:11px;line-height:12px;color:#000;font-weight:bold;transform:scaleX(1.0979);transform-origin:0 0;"><u>A</u>tualizar</div>
<div class="btnr" style="left:1121px;top:545px;width:234px;height:26px"></div>
<svg class="a" style="left:1179.8px;top:550px" width="14" height="16.5" viewBox="0 0 14 16.5"><circle cx="3" cy="2.6" r="1.9" fill="#d2d2d2" stroke="#a8a8a8" stroke-width="0.6"/><circle cx="11" cy="2.6" r="1.9" fill="#d2d2d2" stroke="#a8a8a8" stroke-width="0.6"/><circle cx="7" cy="8.6" r="5.7" fill="#f4f4f4" stroke="#b4b4b4" stroke-width="1.7"/><circle cx="7" cy="8.6" r="3.9" fill="#fafafa" stroke="#e2e2e2" stroke-width="0.6"/><path d="M7 8.6 L5.2 7.6 M7 8.6 L8.6 8.2" stroke="#d03030" stroke-width="0.9"/><path d="M3.2 13.8 L2.2 15.8 M10.8 13.8 L11.8 15.8" stroke="#a8a8a8" stroke-width="1.3"/></svg>
<div class="a" style="left:1197.80px;top:551.3px;font-size:11px;line-height:12px;color:#000;font-weight:bold;transform:scaleX(1.0724);transform-origin:0 0;"><u>E</u>nviar Lembretes</div>
<div class="btnr" style="left:1121px;top:571px;width:234px;height:24px"></div>
<svg class="a" style="left:1182.6px;top:577px" width="14" height="11.5" viewBox="0 0 14 11.5"><path d="M0.9 6.3 L4.6 10.6 L13.2 2 L11.6 0.8 L4.8 6.9 L2.6 4.4Z" fill="#1edc1e" stroke="#0a5c0a" stroke-width="0.9" stroke-linejoin="round"/></svg>
<div class="a" style="left:1200.00px;top:576.3px;font-size:11px;line-height:12px;color:#000;font-weight:bold;transform:scaleX(1.0501);transform-origin:0 0;"><u>E</u>nviar por E-mail</div>
<div class="btnr" style="left:1121px;top:595px;width:234px;height:25px"></div>
<svg class="a" style="left:1202.5px;top:598.6px" width="16.5" height="16.5" viewBox="0 0 16.5 16.5"><path d="M5.2 0.5 L10.6 0.5 L11.6 7 L4.2 7Z" fill="#b4d2f6" stroke="#86aadc" stroke-width="0.8"/><path d="M0.7 9.2 L4 6.4 L12.4 6.4 L15.8 9.2 L15.8 13 L0.7 13Z" fill="#ececec" stroke="#8a8a8a" stroke-width="0.8"/><path d="M0.7 10.4 L15.8 10.4 L15.8 14.2 L0.7 14.2Z" fill="#cfcfcf" stroke="#6e6e6e" stroke-width="0.8"/><path d="M2.6 15.3 H14" stroke="#3a3a3a" stroke-width="1.4"/><circle cx="13.4" cy="11.9" r="0.7" fill="#3c3"/></svg>
<div class="a" style="left:1221.70px;top:600.6px;font-size:11px;line-height:12px;color:#000;font-weight:bold;transform:scaleX(1.1588);transform-origin:0 0;"><u>I</u>mprimir</div>
<div class="a" style="left:1132px;top:624px;width:1px;height:4px;background:#c0c0c0"></div>
<div class="a" style="left:1343px;top:624px;width:1px;height:4px;background:#c0c0c0"></div>
<div class="a" style="left:1128px;top:633px;width:220px;height:13px;border:1px solid #d6d6d6;background:#e7eaea"></div>
<svg class="a" style="left:1222px;top:630px" width="9" height="17" viewBox="0 0 9 17"><path d="M0 4.5 L4.5 0.5 L9 4.5 L9 17 L0 17Z" fill="#0078d7"/></svg>
<div class="a" style="left:415px;top:177px;width:540px;height:3px;background:#a9a9a9;border-top:1px solid #6a6a6a;border-radius:3px 3px 0 0"></div>
<div class="a" style="left:413px;top:190px;width:544px;height:456px;background:#f0f0f0"></div>
<div class="a" style="left:413px;top:190px;width:1px;height:456px;background:#80848f"></div>
<div class="a" style="left:414px;top:190px;width:3px;height:455px;background:#e2eaf5"></div>
<div class="a" style="left:956px;top:190px;width:1px;height:456px;background:#80848f"></div>
<div class="a" style="left:953px;top:190px;width:3px;height:455px;background:#e2eaf5"></div>
<div class="a" style="left:414px;top:642px;width:542px;height:3px;background:#e2eaf5"></div>
<div class="a" style="left:413px;top:645px;width:544px;height:1px;background:#737885"></div>
<div class="a" style="left:415px;top:646px;width:543px;height:1px;background:#c4c4c4"></div>
<div class="a" style="left:417px;top:642px;width:536px;height:1px;background:#fff"></div>
<div class="a" style="left:417px;top:400px;width:411px;height:194px;border:1px solid #a0a0a0;background:#fff"></div>
<div class="a" style="left:417px;top:607px;width:411px;height:1px;background:#fff"></div>
<div class="a" style="left:417px;top:608px;width:536px;height:34px;background:#f0f0f0"></div>
<div class="a" style="left:828px;top:607px;width:125px;height:1px;background:#d2d2d2"></div>
<div class="a" style="left:828px;top:608px;width:125px;height:1px;background:#fff"></div>
<div class="btnr" style="left:834px;top:530px;width:113px;height:23px;border:2px solid #5a6fd0"></div>
<div class="a" style="left:886.00px;top:535.2px;font-size:11px;line-height:12px;color:#000;font-weight:bold;transform:scaleX(1.0073);transform-origin:0 0;"><u>N</u>ovo</div>
<svg class="a" style="left:869px;top:532px" width="13" height="17" viewBox="0 0 13 17"><defs><linearGradient id="nvb" x1="0" y1="0" x2="1" y2="1"><stop offset="0" stop-color="#6f9fdc"/><stop offset="1" stop-color="#c8dcf2"/></linearGradient></defs><rect x="0.5" y="0.5" width="12" height="16" fill="url(#nvb)" stroke="#222" stroke-width="1"/></svg>
<div class="btnr" style="left:834px;top:554px;width:113px;height:24px"></div>
<svg class="a" style="left:862.5px;top:557px" width="15" height="17" viewBox="0 0 15 17"><rect x="0.8" y="2" width="12" height="14.4" fill="#f4f8fc" stroke="#222" stroke-width="1"/><path d="M2.6 5.4H9 M2.6 7.8H9 M2.6 10.2H8 M2.6 12.6H10.6" stroke="#9ab4d4" stroke-width="0.8"/><path d="M11.6 1.2 L13.6 2.6 L9 10.6 L6.8 11.8 L7 9.4Z" fill="#f2d024" stroke="#222" stroke-width="0.8"/><path d="M11.6 1.2 L13.6 2.6 L13 3.6 L11 2.2Z" fill="#3a9a3a"/></svg>
<div class="a" style="left:880.00px;top:560px;font-size:11px;line-height:12px;color:#000;font-weight:bold;transform:scaleX(1.1196);transform-origin:0 0;">Alt<u>e</u>rar</div>
<div class="btnr" style="left:834px;top:579px;width:113px;height:24px"></div>
<svg class="a" style="left:859.5px;top:582.5px" width="17" height="17" viewBox="0 0 17 17"><path d="M2.6 5 L11.6 5 L10.6 15 C9 16.4 5.4 16.4 3.8 15Z" fill="#3468b0" stroke="#16305c" stroke-width="0.8"/><path d="M4 7 L4.8 14.6" stroke="#6f9ad4" stroke-width="1.2"/><ellipse cx="7.1" cy="4.4" rx="5.6" ry="2.1" fill="#44505c" stroke="#1c242c" stroke-width="0.7"/><path d="M3.4 2.6 L5.4 0.8 L8.2 2.2 L10.6 1 L11.6 3.2" stroke="#3a4248" stroke-width="1.1" fill="#5a646c"/><path d="M11.2 10.4 L15.8 12.2 L13.4 15.4 L11 13.6Z" fill="#8c8c8c" stroke="#555" stroke-width="0.5"/><path d="M12.8 9.6 L14.6 10.6" stroke="#e8d020" stroke-width="1.2"/></svg>
<div class="a" style="left:879.00px;top:585.2px;font-size:11px;line-height:12px;color:#000;font-weight:bold;transform:scaleX(1.0740);transform-origin:0 0;">Apaga<u>r</u></div>
<div class="a" style="left:396px;top:180px;width:574px;height:360px;box-shadow:2px 4px 14px 0 rgba(0,0,0,.36)"></div>
<div class="a" style="left:396px;top:180px;width:574px;height:360px;border:1px solid #528c12;background:#f0f0f0"></div>
<div class="a" style="left:397px;top:181px;width:572px;height:26px;background:#fff"></div>
<svg class="a" style="left:401px;top:185px" width="14" height="16" viewBox="0 0 14 16">
<path d="M7 0.9 L13.6 8.6 L7 16 L0.4 8.6Z" fill="#6a4ab0" opacity="0.55"/>
<path d="M7 0 L13.8 8 L7 15.6 L0.2 8Z" fill="#e8781a"/>
<path d="M7 2.55 L8.9 4.5 L7 6.45 L5.1 4.5Z" fill="#fff"/>
<path d="M4 5.95 L5.9 7.9 L4 9.85 L2.1 7.9Z" fill="#fff"/>
<path d="M10 5.95 L11.9 7.9 L10 9.85 L8.1 7.9Z" fill="#fff"/>
<path d="M7 9.35 L8.9 11.3 L7 13.25 L5.1 11.3Z" fill="#fff"/>
</svg>
<div class="a" style="left:421.50px;top:186px;font-size:12px;line-height:14px;color:#000;transform:scaleX(0.9382);transform-origin:0 0;">Cadastro de Recursos</div>
<svg class="a" style="left:948px;top:187px" width="12" height="12" viewBox="0 0 12 12"><path d="M1 1 L11 11 M11 1 L1 11" stroke="#111" stroke-width="1.1"/></svg>
<div class="a" style="left:397px;top:207px;width:1px;height:332px;background:#fbfbfb"></div>
<div class="a" style="left:968px;top:207px;width:1px;height:332px;background:#fbfbfb"></div>
<div class="a" style="left:397px;top:538px;width:572px;height:1px;background:#fbfbfb"></div>
<div class="a" style="left:400px;top:208px;width:568px;height:23px;background:#f0f0f0"></div>
<div class="a" style="left:397px;top:207px;width:3px;height:25px;background:#fff"></div>
<div class="a" style="left:397px;top:231px;width:571px;height:1px;background:#a0a0a0"></div>
<div class="a" style="left:403px;top:210px;width:1px;height:1px;background:#9a9a9a"></div>
<div class="a" style="left:402px;top:211px;width:1px;height:1px;background:#b0b0b0"></div>
<div class="a" style="left:403px;top:214px;width:1px;height:1px;background:#9a9a9a"></div>
<div class="a" style="left:402px;top:215px;width:1px;height:1px;background:#b0b0b0"></div>
<div class="a" style="left:403px;top:218px;width:1px;height:1px;background:#9a9a9a"></div>
<div class="a" style="left:402px;top:219px;width:1px;height:1px;background:#b0b0b0"></div>
<div class="a" style="left:403px;top:222px;width:1px;height:1px;background:#9a9a9a"></div>
<div class="a" style="left:402px;top:223px;width:1px;height:1px;background:#b0b0b0"></div>
<div class="a" style="left:414.30px;top:214.5px;font-size:12px;line-height:14px;color:#000;transform:scaleX(1.0060);transform-origin:0 0;">Opções</div>
<svg class="a" style="left:470px;top:219px" width="7" height="4" viewBox="0 0 7 4"><path d="M0.5 0.3 L6.5 0.3 L3.5 3.8Z" fill="#111"/></svg>
<div class="a" style="left:927px;top:208px;width:1px;height:23px;background:#a0a0a0"></div>
<div class="a" style="left:900.40px;top:214.7px;font-size:9px;line-height:10px;color:#18107e;transform:scaleX(0.9604);transform-origin:0 0;">NT116</div>
<div class="a" style="left:967px;top:208px;width:1px;height:23px;background:#c8c8c8"></div>
<svg class="a" style="left:932px;top:210px" width="32" height="18.6" viewBox="0 0 33 19.5" preserveAspectRatio="none">
<rect x="0.6" y="0.6" width="31.8" height="18.3" rx="4.8" fill="#2a8af2" stroke="#1565d0" stroke-width="1.2"/><rect x="1.6" y="9" width="29.8" height="9" rx="4" fill="#4aa2ff" opacity=".35"/>
<circle cx="10.5" cy="6.6" r="2.7" fill="#fff"/><path d="M5.8 15.3 L5.8 12.5 C5.8 10.5 7.2 9.8 10.5 9.8 C13.8 9.8 15.2 10.5 15.2 12.5 L15.2 15.3Z" fill="#fff"/>
<ellipse cx="22.3" cy="7.2" rx="5.3" ry="3.6" fill="#fff"/><path d="M18.6 9 L16.2 12.2 L20.3 10.3Z" fill="#fff"/>
</svg>
<div class="a" style="left:410.00px;top:232px;font-size:12px;line-height:14px;color:#15158a;transform:scaleX(1.0513);transform-origin:0 0;">Nome Completo (para Impressões)</div>
<div class="a" style="left:410px;top:249px;width:302px;height:23px;border:1px solid #0078d7;background:#ffffe1"></div>
<div class="a" style="left:723.00px;top:232px;font-size:12px;line-height:14px;color:#15158a;transform:scaleX(1.0232);transform-origin:0 0;">Apelido (Exibição dentro do Sistema)</div>
<div class="in" style="left:723px;top:249px;width:224px;height:23px"></div>
<div class="a" style="left:409.00px;top:275px;font-size:12px;line-height:14px;color:#15158a;transform:scaleX(0.9745);transform-origin:0 0;">Grupo</div>
<div class="in" style="left:410px;top:291px;width:276px;height:23px"></div>
<svg class="a" style="left:672px;top:300px" width="10" height="7" viewBox="0 0 10 7"><path d="M1 1.2 L5 5.2 L9 1.2" stroke="#3c3c3c" stroke-width="1" fill="none"/></svg>
<div class="a" style="left:723.00px;top:276px;font-size:12px;line-height:14px;color:#15158a;transform:scaleX(1.0263);transform-origin:0 0;">Tipo</div>
<div class="cb" style="left:723px;top:291px;width:224px;height:23px"></div>
<div class="a" style="left:928px;top:293px;width:17px;height:19px;border:1px solid #adadad;background:#e1e1e1"></div>
<svg class="a" style="left:931.5px;top:299.5px" width="10" height="7" viewBox="0 0 10 7"><path d="M1 1.2 L5 5.2 L9 1.2" stroke="#3c3c3c" stroke-width="1" fill="none"/></svg>
<div class="a" style="left:410.00px;top:316px;font-size:12px;line-height:14px;color:#15158a;transform:scaleX(1.0294);transform-origin:0 0;">E-mail</div>
<div class="in" style="left:410px;top:333px;width:302px;height:23px"></div>
<div class="a" style="left:723.00px;top:316px;font-size:12px;line-height:14px;color:#15158a;transform:scaleX(0.9920);transform-origin:0 0;">DDI</div>
<div class="a" style="left:769.00px;top:316px;font-size:12px;line-height:14px;color:#15158a;transform:scaleX(1.0193);transform-origin:0 0;">DDD</div>
<div class="a" style="left:815.00px;top:316px;font-size:12px;line-height:14px;color:#15158a;transform:scaleX(1.0096);transform-origin:0 0;">Celular SMS</div>
<div class="in" style="left:723px;top:333px;width:40px;height:23px"></div>
<div class="in" style="left:769px;top:333px;width:40px;height:23px"></div>
<div class="in" style="left:815px;top:333px;width:132px;height:23px"></div>
<div class="a" style="left:410.00px;top:362px;font-size:12px;line-height:14px;color:#15158a;transform:scaleX(1.0553);transform-origin:0 0;">Conselho</div>
<div class="cb" style="left:410px;top:380px;width:134px;height:23px"></div>
<div class="a" style="left:525px;top:382px;width:17px;height:19px;border:1px solid #adadad;background:#e1e1e1"></div>
<svg class="a" style="left:528.5px;top:388.5px" width="10" height="7" viewBox="0 0 10 7"><path d="M1 1.2 L5 5.2 L9 1.2" stroke="#3c3c3c" stroke-width="1" fill="none"/></svg>
<div class="a" style="left:550.00px;top:363px;font-size:12px;line-height:14px;color:#15158a;transform:scaleX(1.0547);transform-origin:0 0;">Numero Conselho</div>
<div class="in" style="left:550px;top:380px;width:105px;height:23px;border-color:#555"></div>
<div class="a" style="left:661.00px;top:362px;font-size:12px;line-height:14px;color:#15158a;transform:scaleX(1.0315);transform-origin:0 0;">UF</div>
<div class="a" style="left:661px;top:380px;width:51px;height:23px;border:1px solid #bcbcbc;background:#e1e1e1"></div>
<svg class="a" style="left:698px;top:389px" width="10" height="7" viewBox="0 0 10 7"><path d="M1 1.2 L5 5.2 L9 1.2" stroke="#3c3c3c" stroke-width="1" fill="none"/></svg>
<div class="a" style="left:410.00px;top:413px;font-size:12px;line-height:14px;color:#15158a;transform:scaleX(1.0444);transform-origin:0 0;">CBOS(Especialidades)TissV3</div>
<div class="cb" style="left:410px;top:429px;width:288px;height:23px"></div>
<div class="a" style="left:679px;top:431px;width:17px;height:19px;border:1px solid #adadad;background:#e1e1e1"></div>
<svg class="a" style="left:682.5px;top:437.5px" width="10" height="7" viewBox="0 0 10 7"><path d="M1 1.2 L5 5.2 L9 1.2" stroke="#3c3c3c" stroke-width="1" fill="none"/></svg>
<div class="a" style="left:723px;top:366px;width:224px;height:131px;border:1px solid #dcdcdc"></div>
<div class="a" style="left:729px;top:360px;width:62px;height:12px;background:#f0f0f0"></div>
<div class="a" style="left:731.00px;top:359px;font-size:12px;line-height:14px;color:#222;transform:scaleX(1.0872);transform-origin:0 0;">Comissão</div>
<div class="a" style="left:730.00px;top:376px;font-size:12px;line-height:14px;color:#15158a;transform:scaleX(1.0281);transform-origin:0 0;">Valor Consulta</div>
<div class="in" style="left:730px;top:393px;width:98px;height:23px"></div>
<div class="a" style="left:834.50px;top:376px;font-size:12px;line-height:14px;color:#15158a;transform:scaleX(1.0377);transform-origin:0 0;">% Clinica Consulta</div>
<div class="a" style="left:858px;top:393px;width:60px;height:23px;border:1px solid #7a7a7a;background:#fff"></div>
<svg class="a" style="left:897px;top:395px" width="19" height="19" viewBox="0 0 19 19"><rect x="0.5" y="0.5" width="18" height="18" fill="#dedede" stroke="#a6a6a6"/><path d="M1 18 L18 1 L18 2.4 L2.4 18Z" fill="#f2f2f2"/><path d="M1 18 L18 1" stroke="#8e8e8e" stroke-width="1"/><path d="M5.6 2.6 L8.9 6.4 L6.5 6.4 L6.5 9.6 L4.7 9.6 L4.7 6.4 L2.3 6.4Z" fill="#0a0a0a"/><path d="M13.2 16.4 L9.9 12.6 L12.3 12.6 L12.3 9.4 L14.1 9.4 L14.1 12.6 L16.5 12.6Z" fill="#0a0a0a"/></svg>
<div class="a" style="left:730.00px;top:421px;font-size:12px;line-height:14px;color:#15158a;transform:scaleX(1.0336);transform-origin:0 0;">% Procedimento</div>
<div class="a" style="left:730px;top:439px;width:60px;height:23px;border:1px solid #7a7a7a;background:#fff"></div>
<svg class="a" style="left:769px;top:441px" width="19" height="19" viewBox="0 0 19 19"><rect x="0.5" y="0.5" width="18" height="18" fill="#dedede" stroke="#a6a6a6"/><path d="M1 18 L18 1 L18 2.4 L2.4 18Z" fill="#f2f2f2"/><path d="M1 18 L18 1" stroke="#8e8e8e" stroke-width="1"/><path d="M5.6 2.6 L8.9 6.4 L6.5 6.4 L6.5 9.6 L4.7 9.6 L4.7 6.4 L2.3 6.4Z" fill="#0a0a0a"/><path d="M13.2 16.4 L9.9 12.6 L12.3 12.6 L12.3 9.4 L14.1 9.4 L14.1 12.6 L16.5 12.6Z" fill="#0a0a0a"/></svg>
<div class="a" style="left:858.00px;top:421px;font-size:12px;line-height:14px;color:#15158a;transform:scaleX(1.0249);transform-origin:0 0;">% Indicação</div>
<div class="a" style="left:858px;top:439px;width:60px;height:23px;border:1px solid #7a7a7a;background:#fff"></div>
<svg class="a" style="left:897px;top:441px" width="19" height="19" viewBox="0 0 19 19"><rect x="0.5" y="0.5" width="18" height="18" fill="#dedede" stroke="#a6a6a6"/><path d="M1 18 L18 1 L18 2.4 L2.4 18Z" fill="#f2f2f2"/><path d="M1 18 L18 1" stroke="#8e8e8e" stroke-width="1"/><path d="M5.6 2.6 L8.9 6.4 L6.5 6.4 L6.5 9.6 L4.7 9.6 L4.7 6.4 L2.3 6.4Z" fill="#0a0a0a"/><path d="M13.2 16.4 L9.9 12.6 L12.3 12.6 L12.3 9.4 L14.1 9.4 L14.1 12.6 L16.5 12.6Z" fill="#0a0a0a"/></svg>
<div class="a" style="left:409px;top:459px;width:131px;height:23px;border:1px solid #adadad;background:#e1e1e1"></div>
<div class="a" style="left:417.00px;top:464px;font-size:12px;line-height:14px;color:#15154a;transform:scaleX(1.0394);transform-origin:0 0;">Ficha Personalizada</div>
<div class="a" style="left:550px;top:468px;width:13px;height:13px;border:1px solid #333;background:#fff"></div>
<div class="a" style="left:553px;top:471px;width:7px;height:7px;background:#333"></div>
<div class="a" style="left:566.00px;top:467.7px;font-size:12px;line-height:14px;color:#222;transform:scaleX(0.9371);transform-origin:0 0;">Ativo</div>
<div class="a" style="left:607px;top:468px;width:13px;height:13px;border:1px solid #333;background:#fff"></div>
<div class="a" style="left:610px;top:471px;width:7px;height:7px;background:#333"></div>
<div class="a" style="left:623.00px;top:467.7px;font-size:12px;line-height:14px;color:#222;transform:scaleX(1.0367);transform-origin:0 0;">Possui Agenda</div>
<div class="a" style="left:725px;top:474px;width:13px;height:13px;border:1px solid #333;background:#fff"></div>
<div class="a" style="left:728px;top:477px;width:7px;height:7px;background:#333"></div>
<div class="a" style="left:741.00px;top:473.7px;font-size:12px;line-height:14px;color:#222;transform:scaleX(1.0181);transform-origin:0 0;">Aplicar taxa por forma de pagamento</div>
<div class="a" style="left:401px;top:225px;width:557px;height:246px;border:5px solid #d20f1c"></div>
<div class="a" style="left:397px;top:503px;width:572px;height:1px;background:#e3e3e3"></div>
<div class="a" style="left:397px;top:504px;width:572px;height:1px;background:#fff"></div>
<div class="a" style="left:631px;top:511px;width:94px;height:24px;border:1px solid #adadad;background:#e1e1e1"></div>
<svg class="a" style="left:650px;top:515px" width="16" height="16" viewBox="0 0 16 16"><defs><linearGradient id="sv1" x1="0" y1="0" x2="1" y2="1"><stop offset="0" stop-color="#9cc0f0"/><stop offset="1" stop-color="#2a66c8"/></linearGradient></defs><rect x="0.7" y="1.2" width="14.6" height="12.2" rx="2.4" fill="url(#sv1)" stroke="#0a0a0a" stroke-width="1.3"/><rect x="3.2" y="0.8" width="9.6" height="7" fill="#fdf8a0" stroke="#111" stroke-width="0.7"/><path d="M4.6 2.8H11.4 M4.6 4.4H11.4 M4.6 6H11.4" stroke="#7a9ad0" stroke-width="0.7"/><rect x="3.4" y="11.6" width="9.2" height="3.2" fill="#e6e6e6" stroke="#2a2a2a" stroke-width="0.6"/><rect x="3.4" y="14.2" width="9.2" height="1.3" fill="#555"/></svg>
<div class="a" style="left:670.00px;top:516.5px;font-size:12px;line-height:14px;color:#000;font-weight:bold;transform:scaleX(1.0270);transform-origin:0 0;"><u>S</u>alvar</div>
<div class="a" style="left:0px;top:666px;width:1364px;height:39px;background:#f0f0f0"></div>
<div class="a" style="left:0px;top:686px;width:1364px;height:1px;background:#e3e3e3"></div>
<div class="a" style="left:1px;top:669px;width:168px;height:17px;border:1px solid #0078d7;border-top-color:#0a5fa8;border-bottom:none;background:#cce4f7"></div>
<div class="a" style="left:20.50px;top:671px;font-size:14px;line-height:16px;color:#000;transform:scaleX(0.9262);transform-origin:0 0;">Cadastro de Recursos</div>
<div class="a" style="left:171px;top:669px;width:169px;height:17px;border:1px solid #b2b2b2;border-bottom:none;background:#e1e1e1"></div>
<div class="a" style="left:182.50px;top:671px;font-size:14px;line-height:16px;color:#000;transform:scaleX(0.9347);transform-origin:0 0;">Profissionais e Recursos</div>
<div class="a" style="left:341px;top:669px;width:169px;height:17px;border:1px solid #b2b2b2;border-bottom:none;background:#e1e1e1"></div>
<div class="a" style="left:403.00px;top:671px;font-size:14px;line-height:16px;color:#000;transform:scaleX(0.9116);transform-origin:0 0;">Agenda</div>
</div>
</body>
</html>
